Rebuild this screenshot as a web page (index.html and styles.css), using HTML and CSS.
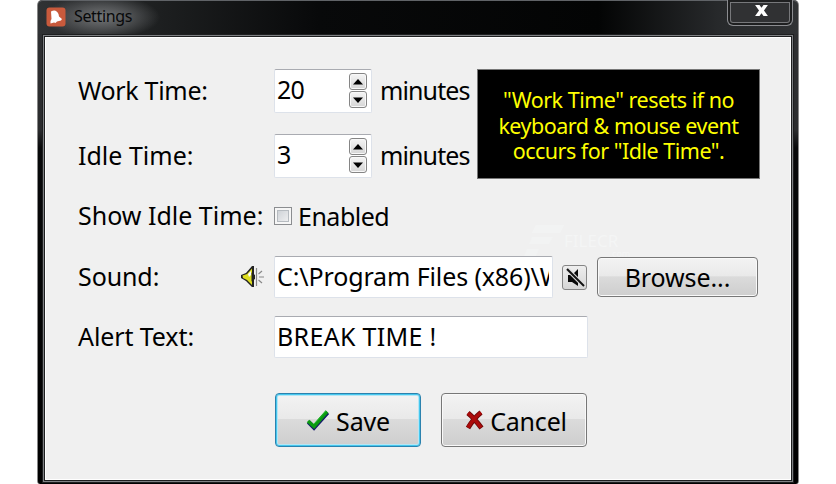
FILE: index.html
```html
<!DOCTYPE html>
<html lang="en">
<head>
<meta charset="utf-8">
<title>Settings</title>
<link rel="stylesheet" href="styles.css">
</head>
<body>
<div class="window">
  <header class="titlebar">
    <svg class="app-icon" viewBox="0 0 20 20"><rect x=".5" y=".5" width="19" height="19" rx="3" fill="#c95a3c"/><path d="M5 4.500Q10 1.500 12.500 7L13 9.500 16 12 15 13.500 11 14.500 9.500 16 8 15.500 4.500 16.500 4.500 14 5.500 12Z" fill="#fff"/></svg>
    <span class="title">Settings</span>
    <button class="close" aria-label="Close"><svg viewBox="0 0 14 12"><path d="M0 0H4.8L7 3 9.2 0H14L9.7 6 14 12H9.2L7 9 4.800 12H0L4.300 6Z" fill="#fff"/></svg></button>
  </header>
  <main class="client">
    <section class="times">
      <div class="fields">
        <div class="row"><label class="label"><span class="t-work">Work Time:</span></label>
          <div class="input spin"><span>20</span><div class="arrows"><button><svg viewBox="0 0 10 6"><path d="M5 0 10 5.500H0Z"/></svg></button><button><svg viewBox="0 0 10 6"><path d="M5 6 0 .5H10Z"/></svg></button></div></div>
          <span class="unit">minutes</span></div>
        <div class="row"><label class="label"><span class="t-idle">Idle Time:</span></label>
          <div class="input spin"><span>3</span><div class="arrows"><button><svg viewBox="0 0 10 6"><path d="M5 0 10 5.500H0Z"/></svg></button><button><svg viewBox="0 0 10 6"><path d="M5 6 0 .5H10Z"/></svg></button></div></div>
          <span class="unit">minutes</span></div>
      </div>
      <div class="tip">"Work Time" resets if no<br>keyboard &amp; mouse event<br>occurs for "Idle Time".</div>
    </section>
    <div class="row show"><label class="label"><span class="t-show">Show Idle Time:</span></label><span class="check"></span><span class="enabled">Enabled</span></div>
    <div class="row sound"><label class="label"><span class="t-sound">Sound:</span>
      <svg class="speaker" viewBox="0 0 24 24"><path d="M0 10 5 8 11 1H13V22H11L5 16 0 13Z" fill="#222"/><path d="M1.500 10.500 6 9 11 3.500V20L6 15 2 13Z" fill="#dede20"/><path d="M7 9 10 6V10L8 12Z" fill="#fff"/><path d="M10.500 7.500 14 10V14L10.500 16.500Z" fill="#222"/><path d="M15.500 3V21M17.500 9 21 6M18 12H23M17.500 15 21 18" fill="none" stroke="#888" stroke-width="1.200"/></svg></label>
      <div class="input path"><span>C:\Program Files (x86)\W</span></div>
      <button class="mute"><svg viewBox="0 0 20 20"><path d="M3 7H7L13 1V18L7 14H3Z" fill="#080808"/><path d="M2 1 19 18" stroke="#ddd" stroke-width="4"/><path d="M2 1 19 18" stroke="#111" stroke-width="2"/></svg></button>
      <button class="btn browse"><span>Browse...</span></button></div>
    <div class="row alert"><label class="label"><span class="t-alert">Alert Text:</span></label><div class="input message"><span>BREAK TIME !</span></div></div>
    <div class="actions">
      <button class="btn save"><svg viewBox="0 0 24 22"><path d="M2.500 13 8 18.500 21.500 3.500" fill="none" stroke="#16166c" stroke-width="4.400"/><path d="M2 12 8 17.500 21 2.500" fill="none" stroke="#0b9a12" stroke-width="3.600"/><path d="M8 15 20 2" stroke="#22bd2b"/></svg><span>Save</span></button>
      <button class="btn cancel"><svg viewBox="0 0 20 22"><path d="M3 3Q9 8 16.500 18M16 2.500Q9 8 3 18" fill="none" stroke="#6d0808" stroke-width="5"/><path d="M3 3Q9 8 16 17.500M16 2.500Q9 8 3 17.500" fill="none" stroke="#ac0a0a" stroke-width="3.400"/></svg><span>Cancel</span></button>
    </div>
  </main>
  <div class="watermark"><svg viewBox="0 0 38 32"><path d="M10 1H38L34 9H6ZM6 13H27L23 20H3ZM1 25H13L10 32H-2Z" fill="#f2f3f3"/></svg><div><span>FILECR</span><small>.com</small></div></div>
</div>
</body>
</html>
```
FILE: styles.css
```css
* { box-sizing: border-box; }
body { margin: 0; width: 836px; height: 484px; overflow: hidden; background: #fff; color: #000; font: 25px/30px "Noto Sans", sans-serif; }
button { font: inherit; color: inherit; padding: 0; margin: 0; }
span { white-space: nowrap; }
svg { display: block; flex: none; overflow: visible; }
.window { position: relative; width: 762px; height: 484px; margin-left: 37px; padding: 0 6px 2px; display: flex; flex-direction: column; border: solid #888; border-width: 0 1px; border-radius: 5px 5px 3px 3px; background: linear-gradient(#303133 0, #2b2c2e 130px, #08090a 148px, #000 100%); }
.titlebar { height: 34px; margin: 0 -6px; flex: none; display: flex; align-items: flex-start; border-top: 1px solid #606367; border-radius: 5px 5px 0 0; background: radial-gradient(ellipse 58px 22px at 64px 16px, #747678 0, rgba(96,98,100,.7) 50%, transparent 100%), linear-gradient(90deg, #303234 0, #202223 100px, #08090a 280px, #030404 560px, #27292b 680px, #303234 100%); }
.app-icon { width: 20px; height: 20px; margin: 6px 8px 0 8px; }
.title { margin-top: 2px; font-size: 16px; line-height: 26px; letter-spacing: -.35px; color: #08090a; }
.close { width: 66px; height: 26px; margin: -1px 5px 0 auto; border: 1px solid #8b8c90; border-top: 0; border-radius: 0 0 6px 6px; background: #303133; box-shadow: inset 0 0 0 2px #1e1f20, inset 0 0 0 3px #77787b; display: grid; place-items: center; }
.close svg { width: 13px; height: 11px; margin: -5px 0 0 2px; }
.client { flex: 1; min-height: 0; padding: 31px 0 0 32px; background: #f0f0f0; border: 1px solid #fff; outline: 1px solid #1e1f20; box-shadow: 0 0 0 2px #7f8184, 0 0 0 3px #1e1f20; margin: 3px 1px 2px; }
.times { display: flex; }
.fields { width: 399px; display: flex; flex-direction: column; gap: 21px; }
.row { display: flex; align-items: center; height: 44px; }
.label { display: flex; align-items: center; width: 196px; flex: none; }
.label span { margin-top: -3px; }
.input { height: 100%; flex: none; display: flex; align-items: center; padding: 0 2px; background: #fff; border: 1px solid #dde2ea; border-top-color: #a9abb1; border-radius: 2px; overflow: hidden; }
.spin { width: 98px; justify-content: space-between; letter-spacing: -.8px; padding-right: 4px; }
.spin span { margin-top: -4px; }
.arrows { display: grid; gap: 1px; margin-top: -1px; }
.arrows button { width: 18px; height: 17px; display: grid; place-items: center; border: 1px solid #858585; border-radius: 3px; background: linear-gradient(#f5f5f5, #d5d5d5); box-shadow: inset 0 0 0 1px #f8f8f8; }
.arrows svg { width: 10px; height: 6px; }
.unit { margin: -3px 0 0 8px; letter-spacing: -.9px; }
.tip { width: 283px; height: 110px; padding-top: 17px; text-align: center; background: #000; border: 1px solid #777; color: #ffff00; font-size: 21.5px; line-height: 25.5px; letter-spacing: -.5px; }
.show { height: 22px; margin-top: 26px; }
.check { width: 18px; height: 18px; border: 1px solid #8b8d90; background: linear-gradient(135deg, #c6cbd1, #f6f6f6); box-shadow: inset 0 0 0 2px #f6f6f6, inset 0 0 0 3px #b6bbc0; }
.enabled { margin-left: 6px; letter-spacing: -.5px; }
.sound { height: 42px; margin-top: 29px; }
.sound .label { justify-content: space-between; padding-right: 9px; }
.speaker { width: 24px; height: 24px; }
.path { width: 279px; }
.path span { width: 272px; flex: none; overflow: hidden; line-height: 36px; margin-top: -2px; letter-spacing: -.12px; }
.mute { width: 25px; height: 25px; margin: 0 10px 0 9px; display: grid; place-items: center; border: 1px solid #858585; border-radius: 3px; background: linear-gradient(#eee, #d6d6d6); }
.mute svg { width: 20px; height: 20px; margin: 1px 0 0 1px; }
.btn { display: flex; align-items: center; justify-content: center; border: 1px solid #777; border-radius: 4px; background: linear-gradient(#f3f3f3, #e9e9e9 48%, #dbdbdb 49%, #cecece); box-shadow: inset 0 0 0 1px #f9f9f9; }
.browse { width: 161px; height: 40px; letter-spacing: -.1px; }
.alert { margin-top: 18px; height: 42px; }
.message { width: 314px; letter-spacing: .32px; }
.message span { margin-top: -2px; }
.actions { display: flex; gap: 20px; margin: 35px 0 0 197px; }
.actions .btn { width: 146px; height: 54px; letter-spacing: -.2px; gap: 4px; padding-left: 2px; }
.actions .save { border-color: #2b82ae; box-shadow: inset 0 0 0 1px #45c7ee, inset 0 0 0 2px #b5e5f4; }
.save svg { width: 24px; height: 22px; margin: -1px 2px 0 -2px; }
.actions .cancel { padding-left: 4px; }
.cancel svg { width: 20px; height: 22px; margin: 2px 1px 0 0; }
.actions span { margin-top: 2px; }
.t-work { letter-spacing: -.3px; }
.t-idle, .t-show { letter-spacing: 0; }
.t-sound, .t-alert { letter-spacing: -.1px; }
.watermark { position: absolute; left: 488px; top: 224px; display: flex; color: #f4f5f5; pointer-events: none; }
.watermark svg { width: 38px; height: 32px; }
.watermark div { display: flex; flex-direction: column; font-size: 17px; line-height: 18px; padding-top: 8px; }
.watermark small { align-self: flex-end; font-size: 9px; line-height: 7px; margin-right: -12px; }
```
